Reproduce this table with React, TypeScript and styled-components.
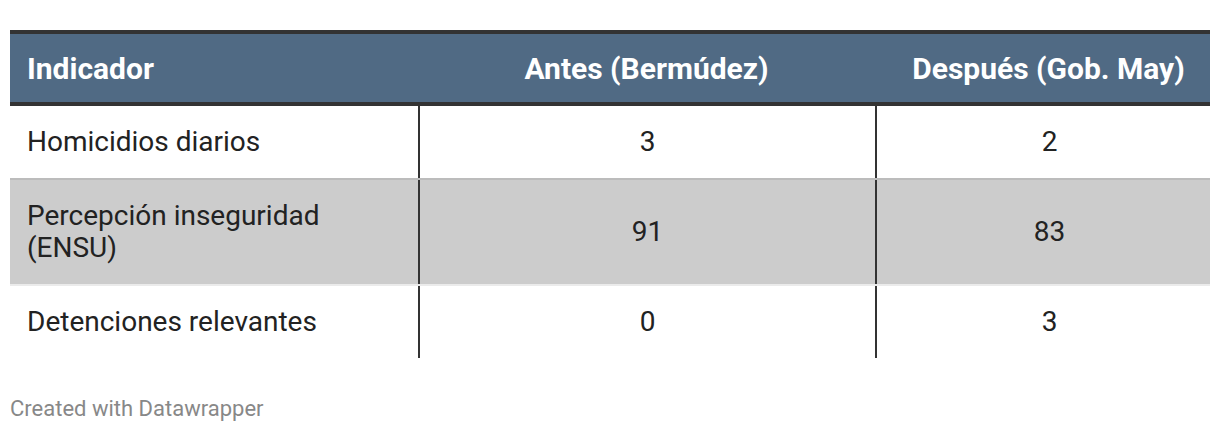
import React from 'react';
import styled, { createGlobalStyle } from 'styled-components';

type Row = {
  id: number;
  indicator: string;
  before: string;
  after: string;
};

const rows: Row[] = [
  { id: 0, indicator: 'Homicidios diarios', before: '3', after: '2' },
  { id: 1, indicator: 'Percepción inseguridad (ENSU)', before: '91', after: '83' },
  { id: 2, indicator: 'Detenciones relevantes', before: '0', after: '3' },
];

const GlobalStyle = createGlobalStyle`
  body {
    margin: 0;
    background: #ffffff;
    font-family: Roboto, "Liberation Sans", sans-serif;
  }
`;

const App = () => {
  return (
    <>
      <GlobalStyle />
      <S.Wrapper>
        <S.Table>
          <S.HeadRow>
            <S.HeadCell $align="left">Indicador</S.HeadCell>
            <S.HeadCell $align="center">Antes (Bermúdez)</S.HeadCell>
            <S.HeadCell $align="center" $last>
              Después (Gob. May)
            </S.HeadCell>
          </S.HeadRow>
          {rows.map((row, i) => (
            <S.BodyRow key={row.id} $striped={i % 2 === 1} $first={i === 0}>
              <S.Cell $align="left">{row.indicator}</S.Cell>
              <S.Cell $align="center" $divider>
                {row.before}
              </S.Cell>
              <S.Cell $align="center" $divider $last>
                {row.after}
              </S.Cell>
            </S.BodyRow>
          ))}
        </S.Table>
        <S.Footer>Created with Datawrapper</S.Footer>
      </S.Wrapper>
    </>
  );
};

const columns = '408px 457px 335px';

const S = {
  Wrapper: styled.div`
    padding: 30px 10px 0 10px;
    width: 1200px;
  `,
  Table: styled.div`
    display: flex;
    flex-direction: column;
    border-top: 4px solid #333333;
  `,
  HeadRow: styled.div`
    display: grid;
    grid-template-columns: ${columns};
    background: #506a84;
    border-bottom: 4px solid #333333;
    height: 68px;
    align-items: center;
  `,
  HeadCell: styled.div<{ $align: string; $last?: boolean }>`
    color: #ffffff;
    font-weight: 700;
    font-size: 30px;
    text-align: ${(p) => p.$align};
    padding: ${(p) => (p.$last ? '0 17px 0 29px' : '0 17px')};
    white-space: nowrap;
  `,
  BodyRow: styled.div<{ $striped: boolean; $first: boolean }>`
    display: grid;
    grid-template-columns: ${columns};
    background: ${(p) => (p.$striped ? '#cccccc' : '#ffffff')};
    border-top: ${(p) => (p.$first ? 'none' : '2px solid rgba(0, 0, 0, 0.08)')};
  `,
  Cell: styled.div<{ $align: string; $divider?: boolean; $last?: boolean }>`
    display: flex;
    align-items: center;
    justify-content: ${(p) => (p.$align === 'center' ? 'center' : 'flex-start')};
    padding: ${(p) => (p.$last ? '20px 17px 20px 29px' : '20px 17px')};
    border-left: ${(p) => (p.$divider ? '2px solid #333333' : 'none')};
    color: #222222;
    font-size: 28px;
    line-height: 32px;
    min-height: 32px;
  `,
  Footer: styled.div`
    margin-top: 38px;
    color: #888888;
    font-size: 22px;
    line-height: 26px;
  `,
};

export default App;
